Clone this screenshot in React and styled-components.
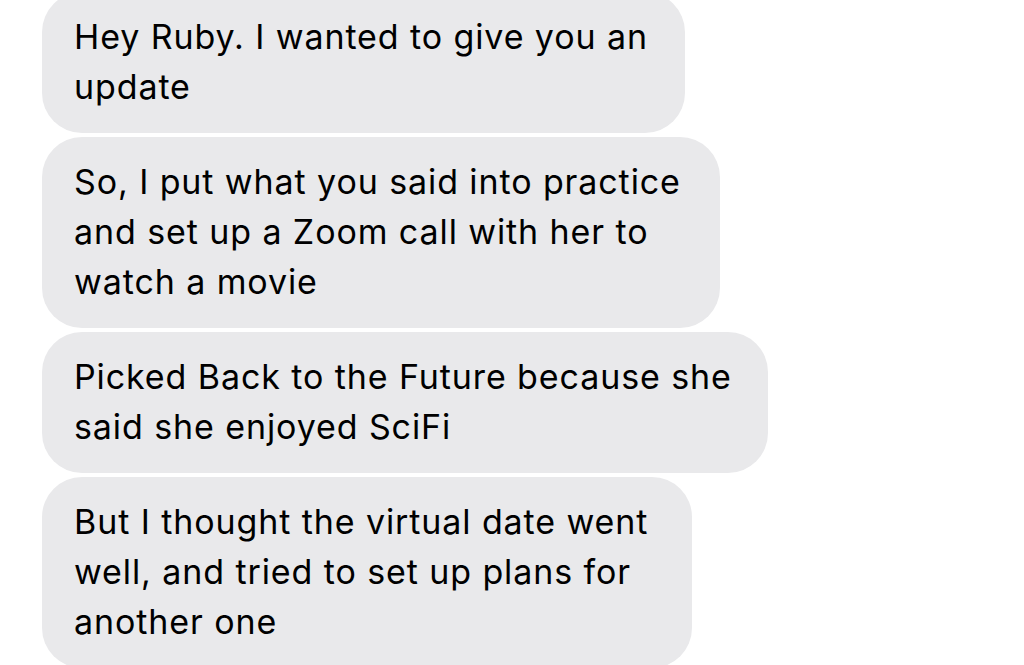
import React from "react";
import styled, { createGlobalStyle } from "styled-components";

const GlobalStyle = createGlobalStyle`
    html, body {
        margin: 0;
        padding: 0;
        background: #ffffff;
        overflow: hidden;
    }
`;

const Thread = styled.div`
    display: flex;
    flex-direction: column;
    align-items: flex-start;
    gap: 4px;
    padding-left: 42px;
    margin-top: -8px;
    font-family: Inter, "Liberation Sans", sans-serif;
`;

const Bubble = styled.div`
    box-sizing: border-box;
    width: ${(p) => p.$width}px;
    padding: 20px 0 21px 32px;
    background: #e9e9eb;
    border-radius: 40px;
    color: #000000;
    font-size: 34px;
    line-height: 50px;
    letter-spacing: 0.9px;
`;

const Line = styled.div`
    white-space: nowrap;
`;

const messages = [
    { width: 643, lines: ["Hey Ruby. I wanted to give you an", "update"] },
    {
        width: 678,
        lines: [
            "So, I put what you said into practice",
            "and set up a Zoom call with her to",
            "watch a movie",
        ],
    },
    {
        width: 726,
        lines: ["Picked Back to the Future because she", "said she enjoyed SciFi"],
    },
    {
        width: 650,
        lines: [
            "But I thought the virtual date went",
            "well, and tried to set up plans for",
            "another one",
        ],
    },
];

const App = () => (
    <>
        <GlobalStyle />
        <Thread>
            {messages.map((m, i) => (
                <Bubble key={i} $width={m.width}>
                    {m.lines.map((l, j) => (
                        <Line key={j}>{l}</Line>
                    ))}
                </Bubble>
            ))}
        </Thread>
    </>
);

export default App;
